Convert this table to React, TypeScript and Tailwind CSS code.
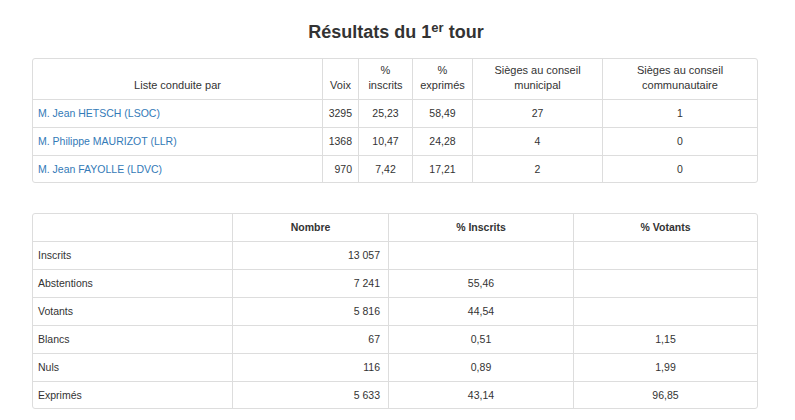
import React from "react";

const t1Rows = [
  { name: "M. Jean HETSCH (LSOC)", voix: "3295", ins: "25,23", exp: "58,49", mun: "27", com: "1" },
  { name: "M. Philippe MAURIZOT (LLR)", voix: "1368", ins: "10,47", exp: "24,28", mun: "4", com: "0" },
  { name: "M. Jean FAYOLLE (LDVC)", voix: "970", ins: "7,42", exp: "17,21", mun: "2", com: "0" },
];

const t2Rows = [
  { label: "Inscrits", n: "13 057", ins: "", vot: "" },
  { label: "Abstentions", n: "7 241", ins: "55,46", vot: "" },
  { label: "Votants", n: "5 816", ins: "44,54", vot: "" },
  { label: "Blancs", n: "67", ins: "0,51", vot: "1,15" },
  { label: "Nuls", n: "116", ins: "0,89", vot: "1,99" },
  { label: "Exprimés", n: "5 633", ins: "43,14", vot: "96,85" },
];

export default function App() {
  return (
    <div
      className="w-[795px] h-[420px] bg-white text-[#333333] text-[10.5px] leading-[15px]"
      style={{ fontFamily: '"Liberation Sans", Arial, sans-serif' }}
    >
      <h1 className="pt-[22px] text-center text-[18px] leading-[20px] font-bold text-[#333333]">
        <span className="mr-[3px]">
          Résultats du 1<sup className="text-[13px]">er</sup> tour
        </span>
      </h1>

      <div className="mt-[16px] ml-[32px] w-[726px] border border-[#dddddd] rounded-[3px] overflow-hidden">
        <table className="w-[724px] table-fixed border-separate border-spacing-0">
          <colgroup>
            <col className="w-[289px]" />
            <col className="w-[36px]" />
            <col className="w-[54px]" />
            <col className="w-[60px]" />
            <col className="w-[130px]" />
            <col className="w-[155px]" />
          </colgroup>
          <thead className="text-[11px]">
            <tr className="h-[40px]">
              <th className="font-normal align-bottom text-center pb-[6px] px-[4px]">Liste conduite par</th>
              <th className="font-normal align-bottom text-center pb-[6px] border-l border-[#dddddd]">Voix</th>
              <th className="font-normal align-bottom text-center pb-[6px] border-l border-[#dddddd]">
                %<br />inscrits
              </th>
              <th className="font-normal align-bottom text-center pb-[6px] border-l border-[#dddddd]">
                %<br />exprimés
              </th>
              <th className="font-normal align-bottom text-center pb-[6px] border-l border-[#dddddd]">
                Sièges au conseil
                <br />
                municipal
              </th>
              <th className="font-normal align-bottom text-center pb-[6px] border-l border-[#dddddd]">
                Sièges au conseil
                <br />
                communautaire
              </th>
            </tr>
          </thead>
          <tbody>
            {t1Rows.map((r, i) => (
              <tr key={r.name} className={i === t1Rows.length - 1 ? "h-[27px]" : "h-[28px]"}>
                <td className="border-t border-[#dddddd] pl-[5px] align-middle">
                  <a className="text-[#337ab7]" href="#">{r.name}</a>
                </td>
                <td className="border-t border-l border-[#dddddd] text-right pr-[6px] align-middle">{r.voix}</td>
                <td className="border-t border-l border-[#dddddd] text-center align-middle">{r.ins}</td>
                <td className="border-t border-l border-[#dddddd] text-center align-middle">{r.exp}</td>
                <td className="border-t border-l border-[#dddddd] text-center align-middle">{r.mun}</td>
                <td className="border-t border-l border-[#dddddd] text-center align-middle">{r.com}</td>
              </tr>
            ))}
          </tbody>
        </table>
      </div>

      <div className="mt-[30px] ml-[32px] w-[726px] border border-[#dddddd] rounded-[3px] overflow-hidden">
        <table className="w-[724px] table-fixed border-separate border-spacing-0">
          <colgroup>
            <col className="w-[199px]" />
            <col className="w-[156px]" />
            <col className="w-[185px]" />
            <col className="w-[184px]" />
          </colgroup>
          <thead>
            <tr className="h-[27px]">
              <th></th>
              <th className="font-bold text-center align-middle border-l border-[#dddddd]">Nombre</th>
              <th className="font-bold text-center align-middle border-l border-[#dddddd]">% Inscrits</th>
              <th className="font-bold text-center align-middle border-l border-[#dddddd]">% Votants</th>
            </tr>
          </thead>
          <tbody>
            {t2Rows.map((r, i) => (
              <tr key={r.label} className={i === t2Rows.length - 1 ? "h-[27px]" : "h-[28px]"}>
                <td className="border-t border-[#dddddd] pl-[5px] align-middle">{r.label}</td>
                <td className="border-t border-l border-[#dddddd] text-right pr-[8px] align-middle">{r.n}</td>
                <td className="border-t border-l border-[#dddddd] text-center align-middle">{r.ins}</td>
                <td className="border-t border-l border-[#dddddd] text-center align-middle">{r.vot}</td>
              </tr>
            ))}
          </tbody>
        </table>
      </div>
    </div>
  );
}
